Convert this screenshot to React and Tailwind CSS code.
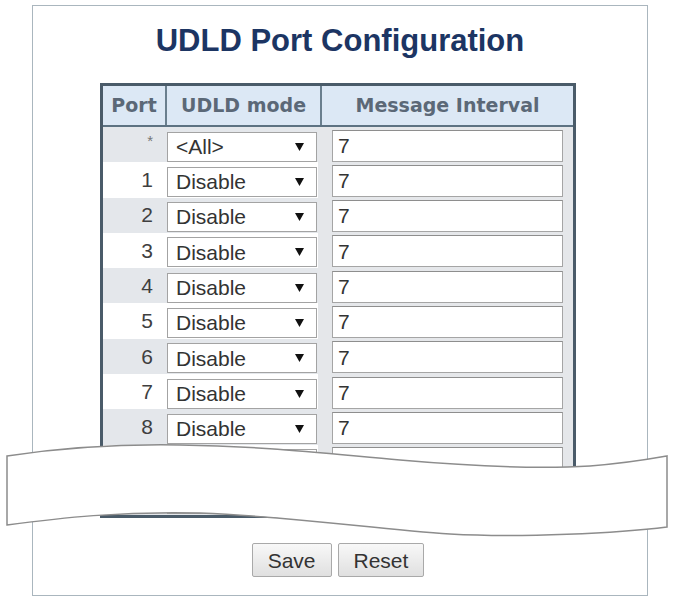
const rows = ["*", "1", "2", "3", "4", "5", "6", "7", "8", "9", "10"];

function Arrow() {
  return (
    <svg width="9" height="8" viewBox="0 0 9 8" className="shrink-0">
      <path d="M0 0 H9 L4.5 8 Z" fill="#111" />
    </svg>
  );
}

export default function App() {
  return (
    <div className="relative w-[674px] h-[598px] bg-white overflow-hidden font-['Liberation_Sans',Arial,sans-serif]">
      <div className="pt-[5px] pl-[32px]">
        <div className="w-[616px] h-[591px] border border-[#aab6be] flex flex-col">
          <h1 className="mt-[19px] text-center text-[31px] leading-[31px] font-bold text-[#1c3563]">
            UDLD Port Configuration
          </h1>
          <div className="mt-[27px] ml-[67px] w-[476px] border-[3px] border-[#4a5b69]">
            <div className="flex h-[41px] bg-[#dce8f5] border-b-2 border-[#5d7282] font-['DejaVu_Sans',Verdana,sans-serif] font-bold text-[19px] text-[#5b6877]">
              <div className="w-[64px] border-r-2 border-[#6a7f8e] flex items-center justify-center">Port</div>
              <div className="w-[155px] border-r-2 border-[#6a7f8e] flex items-center justify-center">UDLD mode</div>
              <div className="flex-1 flex items-center justify-center">Message Interval</div>
            </div>
            {rows.map((r, i) => {
              const bg = i % 2 === 0 ? "bg-[#e4e7eb]" : "bg-white";
              return (
                <div key={r} className={`flex h-[35.3px] ${bg}`}>
                  <div className="w-[63px] flex items-center justify-end pr-[13px] text-[21px] text-[#3f3f3f]">
                    {r === "*" ? (
                      <span className="text-[15px] text-[#777] -mt-[6px]">*</span>
                    ) : (
                      r
                    )}
                  </div>
                  <div className="w-[152px]">
                    <div className="ml-[1px] mt-[4.5px] w-[150px] h-[30px] border border-[#a3a3a3] bg-white flex items-center justify-between pl-[8px] pr-[12px] text-[21px] text-[#333]">
                      <span>{r === "*" ? "<All>" : "Disable"}</span>
                      <Arrow />
                    </div>
                  </div>
                  <div className="flex-1 bg-[#e5e7ea]">
                    <div className="ml-[14px] mt-[2.5px] w-[231px] h-[32px] border border-[#a5a5a5] border-t-[#8e8e8e] bg-white flex items-center pl-[5px] text-[21px] text-[#333]">
                      7
                    </div>
                  </div>
                </div>
              );
            })}
          </div>
          <div className="mt-[25px] flex justify-center gap-[6px] pr-[4px]">
            <button className="h-[34px] px-[15px] border border-[#a9a9a9] bg-linear-to-b from-[#f8f8f8] to-[#e0e0e0] text-[21px] text-[#333] leading-none rounded-[2px]">
              Save
            </button>
            <button className="h-[34px] px-[15px] border border-[#a9a9a9] bg-linear-to-b from-[#f8f8f8] to-[#e0e0e0] text-[21px] text-[#333] leading-none rounded-[2px]">
              Reset
            </button>
          </div>
        </div>
      </div>
      <svg
        className="absolute left-0 top-0 pointer-events-none"
        width="674"
        height="598"
        viewBox="0 0 674 598"
      >
        <path
          d="M7,456 C60,448 120,444 180,445 C260,446 320,453 400,460 C480,467 540,469 590,466 C630,463 650,459 667,456 L667,527 C620,533 520,538 450,534 C380,530 300,517 200,513 C120,511 60,518 7,525 Z"
          fill="#ffffff"
          stroke="#8c8c8c"
          strokeWidth="1.5"
        />
      </svg>
    </div>
  );
}
